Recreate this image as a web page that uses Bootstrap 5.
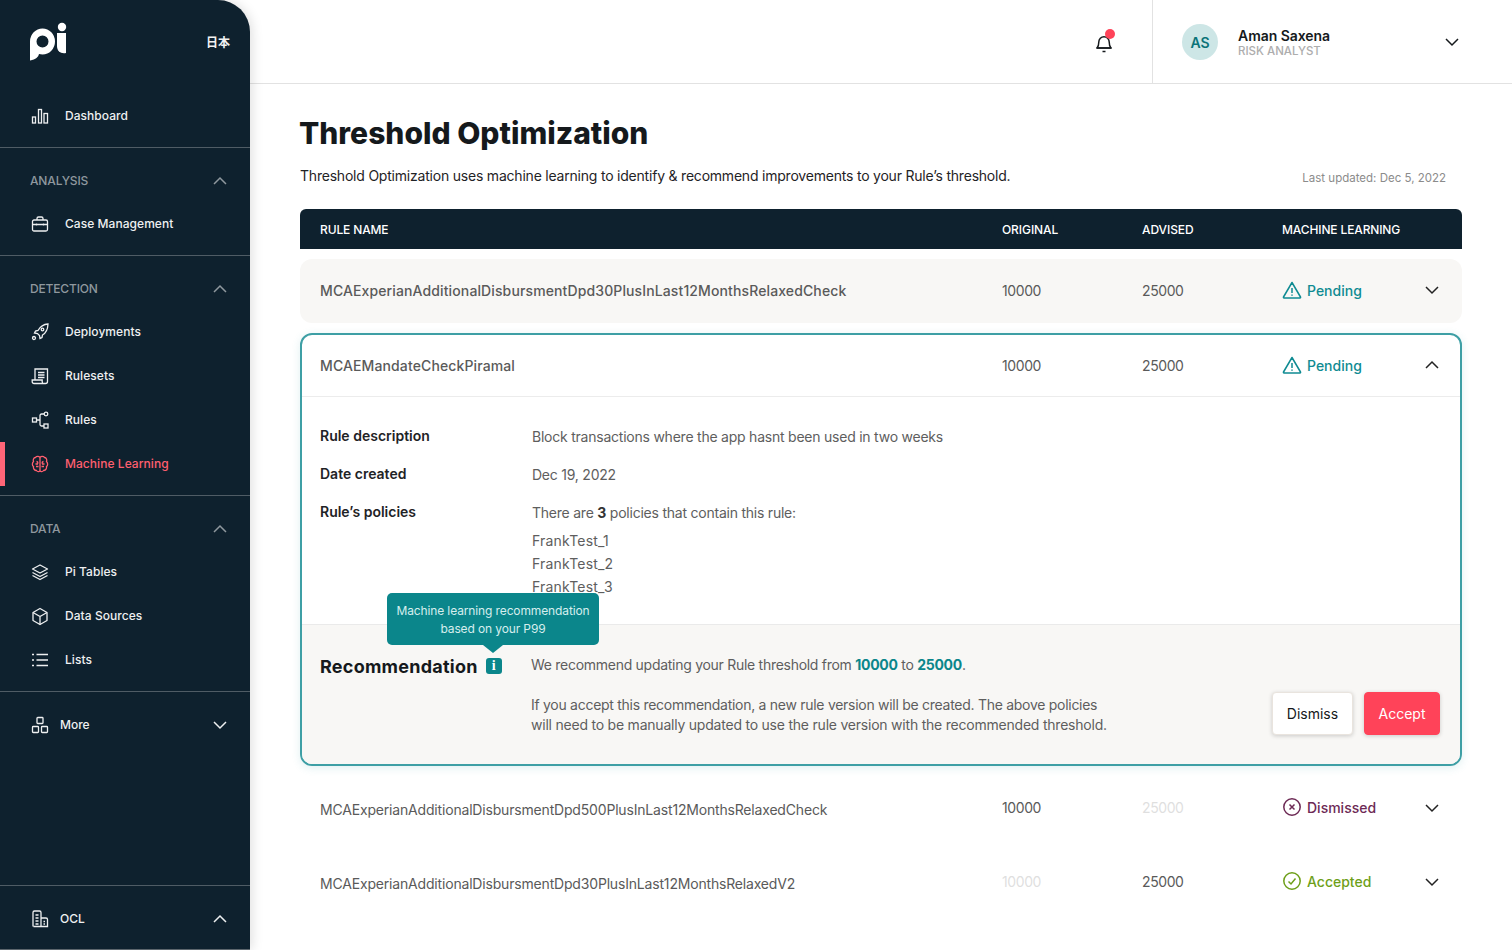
<!doctype html>
<html lang="en">
<head>
<meta charset="utf-8">
<title>Threshold Optimization</title>
<link rel="stylesheet" href="https://cdn.jsdelivr.net/npm/bootstrap@5.3.0/dist/css/bootstrap.min.css">
<style>
:root{--navy:#0e212e;--teal:#0b868b;--coral:#ff4359;}
html,body{height:950px;overflow:hidden}
body{font-family:Inter,"Noto Sans CJK JP",sans-serif;color:#1c1c1c;background:#fff;}
.sidebar-shell{width:250px;height:950px;background:var(--navy);border-top-right-radius:32px;box-shadow:2px 0 12px rgba(0,0,0,.13);flex:none;z-index:2;color:#f2f2f2;border-bottom:1px solid #5c666d}
.brand-row{height:94px;padding:22px 20px 0 30px}
.lang-switch{font-size:12px;font-weight:700;margin-top:13px;line-height:16px}
.nav-item-row{height:44px;padding-left:30px;font-size:12px;font-weight:500;color:#eef0f1;letter-spacing:.05px;position:relative}
.nav-item-row svg{width:20px;height:20px;margin-right:15px;flex:none}
.nav-item-row.active-item{color:#ff5f6f}
.nav-item-row.active-item::before{content:"";position:absolute;left:0;top:0;bottom:0;width:5px;background:#ff6577}
.side-block{border-bottom:1px solid #4f5c65;padding-bottom:9px}
.side-head{padding:23px 23px 11px 30px;font-size:12px;font-weight:500;color:#8f989e;line-height:20px;letter-spacing:-.15px}
.side-more{height:66px;padding:0 23px 0 30px;font-size:12px;font-weight:500;color:#eef0f1}
.side-more svg.mi{width:20px;height:20px;margin-right:10px}
.side-foot{height:63px;padding:2px 23px 0 30px;font-size:12px;font-weight:500;color:#eef0f1}
.side-foot svg.mi{width:20px;height:20px;margin-right:10px}
.side-fill{flex:1;border-bottom:1px solid #4f5c65}
.chev{width:14px;height:14px;flex:none}
.chev-dim{color:#8f989e}
.topbar{height:84px;border-bottom:1px solid #e2e2e2;flex:none}
.bell-cell{padding-right:36px}
.bell-wrap{position:relative;width:24px;height:24px}
.bell-dot{position:absolute;width:10px;height:10px;border-radius:50%;background:var(--coral);right:1px;top:-1px}
.user-cell{width:360px;border-left:1px solid #e2e2e2;padding:0 53px 0 29px}
.avatar-disc{width:36px;height:36px;border-radius:50%;background:#cde6e6;color:#0b7378;font-weight:600;font-size:14px;margin-right:20px;padding-top:2px}
.user-name{font-size:14px;font-weight:600;line-height:17px;color:#15191c;letter-spacing:-.05px}
.user-role{font-size:11.5px;font-weight:500;line-height:14px;color:#adadad}
.user-text{padding-top:2px}
.page-body{padding:30px 50px 0 50px}
.page-title{font-size:30px;font-weight:800;line-height:38px;margin:0 0 0 -1px;color:#15191c}
.page-sub{margin-top:14px;height:43px}
.page-lead{font-size:14px;letter-spacing:-.21px;line-height:20px;color:#1f2326}
.updated-note{font-size:11.5px;color:#8b8b8b;margin-right:16px;padding-top:3px;line-height:18px}
.head-strip{height:40px;background:var(--navy);color:#fff;border-radius:6px 6px 0 0;font-size:12px;font-weight:500;padding:2px 0 0 20px;margin-bottom:10px;letter-spacing:-.13px}
.c-name{width:682px;flex:none}
.c-num{width:140px;flex:none;letter-spacing:-.4px}
.head-strip .c-num{letter-spacing:-.08px}
.c-stat{flex:1}
.rule-row{height:64px;padding:0 23px 2px 20px;font-size:14px;color:#5a5a5a;border-radius:12px;margin-bottom:10px}
.rule-row.tinted{background:#f8f7f5;margin-top:0}
.rule-row .c-name{font-weight:500;letter-spacing:.12px}
.rule-row.plain-row .c-name{font-weight:400;letter-spacing:-.18px;padding-top:4px}
.rule-row.plain-row .chev{margin-top:2px}
.num-faded{color:#dfdfdf}
.status-tag{font-size:14px;font-weight:500;gap:5px;display:flex;align-items:center}
.status-tag svg{width:20px;height:20px}
.tag-pending{color:#0f8b92}
.tag-dismissed{color:#6d2a55}
.tag-accepted{color:#6e9f1a}
.open-card{border:2px solid #3e9fa5;border-radius:12px;box-shadow:0 2px 8px rgba(62,159,165,.16);margin-bottom:10px;height:433px;overflow:visible}
.open-card .rule-row{height:62px;padding:0 21px 1px 18px;margin:0;border-bottom:1px solid #ececec;border-radius:10px 10px 0 0}
.open-card .c-name{width:682px}
.facts{padding:28px 18px 0;height:227px;font-size:14px}
.fact-row{margin-bottom:14px;line-height:24px}
.fact-key{width:212px;font-weight:600;color:#1f2326;flex:none;font-size:14px;margin-top:-1px}
.fact-val{color:#5e5e5e;letter-spacing:-.23px}
.fact-val b{color:#333;font-weight:700}
.policy-line{line-height:23px;letter-spacing:.2px}
.rec-panel{background:#f8f7f5;border-top:1px solid #eaeaea;height:140px;border-radius:0 0 10px 10px;padding:30px 20px 0 18px;position:relative}
.rec-title{font-size:18px;font-weight:700;color:#15191c;line-height:28px;letter-spacing:.24px}
.rec-head{width:211px;flex:none;position:relative;margin-top:-2px}
.info-badge{width:16px;height:16px;background:var(--teal);color:#fff;border-radius:3px;font-size:14px;font-weight:800;line-height:16px;text-align:center;font-family:"Liberation Serif",serif;margin-left:8px;margin-top:-3px}
.tip-bubble{position:absolute;left:67px;top:-60px;width:212px;height:52px;background:var(--teal);color:#d6eeee;font-size:12px;line-height:18px;padding:9px 6px;text-align:center;border-radius:5px;letter-spacing:-.12px}
.tip-bubble::after{content:"";position:absolute;left:96px;bottom:-8px;border-left:10px solid transparent;border-right:10px solid transparent;border-top:8px solid var(--teal)}
.rec-text{font-size:14px;color:#5e5e5e;line-height:20px;letter-spacing:-.28px}
.rec-text b{color:var(--teal);font-weight:700}
.rec-text p{margin:0}
.rec-text p+p{margin-top:20px}
.rec-text .line-wide{letter-spacing:-.22px}
.act-btn{height:43px;font-size:14px;border-radius:4px;box-shadow:0 1px 4px rgba(0,0,0,.18);font-weight:400;display:flex;align-items:center;justify-content:center;padding:0}
.btn-dismiss{width:81px;background:#fff;color:#15191c;border:1px solid #e9e4de}
.btn-accept{width:76px;background:var(--coral);color:#fff;border:1px solid var(--coral);margin-left:11px}
.rec-actions{margin-left:auto;margin-top:37px}
</style>
</head>
<body class="d-flex">
<aside class="sidebar-shell d-flex flex-column">
  <div class="brand-row d-flex justify-content-between align-items-start">
    <svg width="37" height="40" viewBox="0 0 37 40" aria-label="pi logo">
      <path fill="#fff" fill-rule="evenodd" d="M0 19.500a12.500 13 0 1 1 12.500 13c-1.300 0-2.400-.2-3.500-.5-.7 3-3 5.500-9 6.500ZM6.500 19.500a6 6 0 1 0 12 0a6 6 0 1 0-12 0Z"/>
      <circle cx="32" cy="5" r="4.200" fill="#fff"/>
      <path fill="#fff" d="M27 11h9v20c-5.500 1-9-2-9-7Z"/>
    </svg>
    <span class="lang-switch">日本</span>
  </div>
  <div class="side-block">
    <div class="nav-item-row d-flex align-items-center">
      <svg viewBox="0 0 20 20" fill="none" stroke="currentColor" stroke-width="1.300"><rect x="2.500" y="11" width="3" height="6"/><rect x="8.500" y="3.500" width="3" height="13.500"/><rect x="14" y="7.500" width="3.500" height="9.500"/></svg>Dashboard</div>
  </div>
  <div class="side-block">
    <div class="side-head d-flex justify-content-between align-items-center">ANALYSIS<svg class="chev chev-dim" viewBox="0 0 14 14" fill="none" stroke="currentColor" stroke-width="1.500"><path d="M1 10l6-6 6 6"/></svg></div>
    <div class="nav-item-row d-flex align-items-center">
      <svg viewBox="0 0 20 20" fill="none" stroke="currentColor" stroke-width="1.300"><rect x="2.500" y="6" width="15" height="11" rx="1.500"/><path d="M7 6V4.500A1.500 1.500 0 0 1 8.500 3h3A1.500 1.500 0 0 1 13 4.500V6M2.500 10.500h15M6.500 9.500v2M13.500 9.500v2"/></svg>Case Management</div>
  </div>
  <div class="side-block">
    <div class="side-head d-flex justify-content-between align-items-center">DETECTION<svg class="chev chev-dim" viewBox="0 0 14 14" fill="none" stroke="currentColor" stroke-width="1.500"><path d="M1 10l6-6 6 6"/></svg></div>
    <div class="nav-item-row d-flex align-items-center">
      <svg viewBox="0 0 20 20" fill="none" stroke="currentColor" stroke-width="1.300"><path d="M18 2c-5 .3-8 3-10 6.500l-2.500.5-1 2 3 .5 2 2 .5 3 2-1 .5-2.500C16 11 17.800 7 18 2Z"/><circle cx="12.500" cy="7.500" r="1.300"/><circle cx="4" cy="16" r="1.500"/></svg>Deployments</div>
    <div class="nav-item-row d-flex align-items-center">
      <svg viewBox="0 0 20 20" fill="none" stroke="currentColor" stroke-width="1.300"><path d="M5 14V3h12.500v12.500a2 2 0 0 1-2 2H4a1.800 1.800 0 0 1-1.800-1.800V14h10v2a1.700 1.700 0 0 0 1.700 1.500"/><path d="M8 6.500h6.500M8 9h6.500M8 11.500h6.500"/></svg>Rulesets</div>
    <div class="nav-item-row d-flex align-items-center">
      <svg viewBox="0 0 20 20" fill="none" stroke="currentColor" stroke-width="1.300"><rect x="2.500" y="8" width="4" height="4"/><circle cx="16" cy="4" r="1.800"/><rect x="14" y="14" width="4" height="4"/><path d="M6.500 10H10M14 4h-2.500a1.500 1.500 0 0 0-1.500 1.500v9A1.500 1.500 0 0 0 11.500 16H14"/></svg>Rules</div>
    <div class="nav-item-row active-item d-flex align-items-center">
      <svg viewBox="0 0 20 20" fill="none" stroke="currentColor" stroke-width="1.300"><path d="M10 3.500C9 2 6.500 2 5.500 3.500 3.500 3.800 2.800 6 3.500 7.500 2 9 2 11.500 3.500 12.500c-.5 2 1 4 3 4 1 1.500 2.700 1.500 3.500.3.800 1.200 2.500 1.200 3.500-.3 2 0 3.500-2 3-4C18 11.500 18 9 16.500 7.500c.7-1.500 0-3.700-2-4C13.500 2 11 2 10 3.500Z"/><path d="M10 3.500v13.300M6.500 7.500c1 .2 1.500.8 1.500 2M6 12.500h2.500M13.500 7.500c-1 .2-1.500.8-1.500 2M14 12.500h-2.500M5.500 10h2.500M12 10h2.500"/></svg>Machine Learning</div>
  </div>
  <div class="side-block">
    <div class="side-head d-flex justify-content-between align-items-center">DATA<svg class="chev chev-dim" viewBox="0 0 14 14" fill="none" stroke="currentColor" stroke-width="1.500"><path d="M1 10l6-6 6 6"/></svg></div>
    <div class="nav-item-row d-flex align-items-center">
      <svg viewBox="0 0 20 20" fill="none" stroke="currentColor" stroke-width="1.300" stroke-linejoin="round"><path d="M10 3l7.500 4-7.500 4-7.500-4Z"/><path d="M2.500 10.500l7.500 4 7.500-4M2.500 13.500l7.500 4 7.500-4"/></svg>Pi Tables</div>
    <div class="nav-item-row d-flex align-items-center">
      <svg viewBox="0 0 20 20" fill="none" stroke="currentColor" stroke-width="1.300" stroke-linejoin="round"><path d="M10 2.500l7 4v8l-7 4-7-4v-8Z"/><path d="M3 6.500l7 4 7-4M10 10.500v8"/></svg>Data Sources</div>
    <div class="nav-item-row d-flex align-items-center">
      <svg viewBox="0 0 20 20" fill="none" stroke="currentColor" stroke-width="1.300"><path d="M6.500 4.500H18M6.500 10H18M6.500 15.500H18M2 4.500h2M2 10h2M2 15.500h2"/></svg>Lists</div>
  </div>
  <div class="side-more d-flex align-items-center">
    <svg class="mi" viewBox="0 0 20 20" fill="none" stroke="currentColor" stroke-width="1.300"><rect x="7" y="2.500" width="6" height="6" rx=".8"/><rect x="2.500" y="11.500" width="6" height="6" rx=".8"/><rect x="11.500" y="11.500" width="6" height="6" rx=".8"/></svg>
    <span>More</span>
    <svg class="chev ms-auto" viewBox="0 0 14 14" fill="none" stroke="currentColor" stroke-width="1.500"><path d="M1 4l6 6 6-6"/></svg>
  </div>
  <div class="side-fill"></div>
  <div class="side-foot d-flex align-items-center">
    <svg class="mi" viewBox="0 0 20 20" fill="none" stroke="currentColor" stroke-width="1.300"><path d="M3 17.500V3.500a1.500 1.500 0 0 1 1.500-1.500h5A1.500 1.500 0 0 1 11 3.500v14M11 9h5a1.500 1.500 0 0 1 1.500 1.500v7H3.500M5.500 6h3M5.500 9h3M5.500 12h3M5.500 15h3M13.500 12.500h1.500M13.500 15h1.500"/></svg>
    <span>OCL</span>
    <svg class="chev ms-auto" viewBox="0 0 14 14" fill="none" stroke="currentColor" stroke-width="1.500"><path d="M1 10l6-6 6 6"/></svg>
  </div>
</aside>

<main class="flex-grow-1 d-flex flex-column" style="min-width:0">
  <header class="topbar d-flex justify-content-end">
    <div class="bell-cell d-flex align-items-center">
      <div class="bell-wrap">
        <svg width="24" height="24" viewBox="0 0 24 24" fill="none" stroke="#15191c" stroke-width="1.500"><path d="M5 17c1.500-1.500 1.800-3 1.800-6a5.200 5.200 0 0 1 10.400 0c0 3 .3 4.500 1.800 6Z" stroke-linejoin="round"/><path d="M4.500 17h15M10.500 20.500h3"/></svg>
        <span class="bell-dot"></span>
      </div>
    </div>
    <div class="user-cell d-flex align-items-center">
      <div class="avatar-disc d-flex align-items-center justify-content-center">AS</div>
      <div class="user-text">
        <div class="user-name">Aman Saxena</div>
        <div class="user-role">RISK ANALYST</div>
      </div>
      <svg class="chev ms-auto" viewBox="0 0 14 14" fill="none" stroke="#15191c" stroke-width="1.500"><path d="M1 4l6 6 6-6"/></svg>
    </div>
  </header>

  <div class="page-body">
    <h1 class="page-title">Threshold Optimization</h1>
    <div class="page-sub d-flex justify-content-between align-items-start">
      <div class="page-lead">Threshold Optimization uses machine learning to identify &amp; recommend improvements to your Rule’s threshold.</div>
      <div class="updated-note">Last updated: Dec 5, 2022</div>
    </div>

    <div class="head-strip d-flex align-items-center">
      <div class="c-name">RULE NAME</div><div class="c-num">ORIGINAL</div><div class="c-num">ADVISED</div><div class="c-stat">MACHINE LEARNING</div>
    </div>

    <div class="rule-row tinted d-flex align-items-center">
      <div class="c-name">MCAExperianAdditionalDisbursmentDpd30PlusInLast12MonthsRelaxedCheck</div>
      <div class="c-num">10000</div><div class="c-num">25000</div>
      <div class="c-stat status-tag tag-pending"><svg viewBox="0 0 20 20" fill="none" stroke="currentColor" stroke-width="1.500" stroke-linejoin="round"><path d="M10 2.500L18.500 17a.6.6 0 0 1-.5.9H2a.6.6 0 0 1-.5-.9Z"/><path d="M10 8v5M10 14.500v1.200"/></svg>Pending</div>
      <svg class="chev" viewBox="0 0 14 14" fill="none" stroke="#222" stroke-width="1.500"><path d="M1 4l6 6 6-6"/></svg>
    </div>

    <section class="open-card">
      <div class="rule-row d-flex align-items-center">
        <div class="c-name">MCAEMandateCheckPiramal</div>
        <div class="c-num">10000</div><div class="c-num">25000</div>
        <div class="c-stat status-tag tag-pending"><svg viewBox="0 0 20 20" fill="none" stroke="currentColor" stroke-width="1.500" stroke-linejoin="round"><path d="M10 2.500L18.500 17a.6.6 0 0 1-.5.9H2a.6.6 0 0 1-.5-.9Z"/><path d="M10 8v5M10 14.500v1.200"/></svg>Pending</div>
        <svg class="chev" viewBox="0 0 14 14" fill="none" stroke="#222" stroke-width="1.500"><path d="M1 10l6-6 6 6"/></svg>
      </div>
      <div class="facts">
        <div class="fact-row d-flex"><div class="fact-key">Rule description</div><div class="fact-val">Block transactions where the app hasnt been used in two weeks</div></div>
        <div class="fact-row d-flex"><div class="fact-key">Date created</div><div class="fact-val">Dec 19, 2022</div></div>
        <div class="fact-row d-flex"><div class="fact-key">Rule’s policies</div>
          <div class="fact-val">
            <div class="mb-1">There are <b>3</b> policies that contain this rule:</div>
            <div class="policy-line">FrankTest_1</div><div class="policy-line">FrankTest_2</div><div class="policy-line">FrankTest_3</div>
          </div>
        </div>
      </div>
      <div class="rec-panel d-flex align-items-start">
        <div class="rec-head d-flex align-items-center">
          <span class="rec-title">Recommendation</span><span class="info-badge">i</span>
          <div class="tip-bubble">Machine learning recommendation based on your P99</div>
        </div>
        <div class="rec-text">
          <p>We recommend updating your Rule threshold from <b>10000</b> to <b>25000</b>.</p>
          <p>If you accept this recommendation, a new rule version will be created. The above policies<br><span class="line-wide">will need to be manually updated to use the rule version with the recommended threshold.</span></p>
        </div>
        <div class="rec-actions d-flex">
          <button type="button" class="btn act-btn btn-dismiss">Dismiss</button>
          <button type="button" class="btn act-btn btn-accept">Accept</button>
        </div>
      </div>
    </section>

    <div class="rule-row plain-row d-flex align-items-center">
      <div class="c-name">MCAExperianAdditionalDisbursmentDpd500PlusInLast12MonthsRelaxedCheck</div>
      <div class="c-num">10000</div><div class="c-num num-faded">25000</div>
      <div class="c-stat status-tag tag-dismissed"><svg viewBox="0 0 20 20" fill="none" stroke="currentColor" stroke-width="1.500"><circle cx="10" cy="10" r="8.200"/><path d="M7.500 7.500l5 5M12.500 7.500l-5 5"/></svg>Dismissed</div>
      <svg class="chev" viewBox="0 0 14 14" fill="none" stroke="#222" stroke-width="1.500"><path d="M1 4l6 6 6-6"/></svg>
    </div>
    <div class="rule-row plain-row d-flex align-items-center">
      <div class="c-name">MCAExperianAdditionalDisbursmentDpd30PlusInLast12MonthsRelaxedV2</div>
      <div class="c-num num-faded">10000</div><div class="c-num">25000</div>
      <div class="c-stat status-tag tag-accepted"><svg viewBox="0 0 20 20" fill="none" stroke="currentColor" stroke-width="1.500"><circle cx="10" cy="10" r="8.200"/><path d="M6.500 10.500l2.500 2.500 4.500-5.500"/></svg>Accepted</div>
      <svg class="chev" viewBox="0 0 14 14" fill="none" stroke="#222" stroke-width="1.500"><path d="M1 4l6 6 6-6"/></svg>
    </div>
  </div>
</main>
</body>
</html>
